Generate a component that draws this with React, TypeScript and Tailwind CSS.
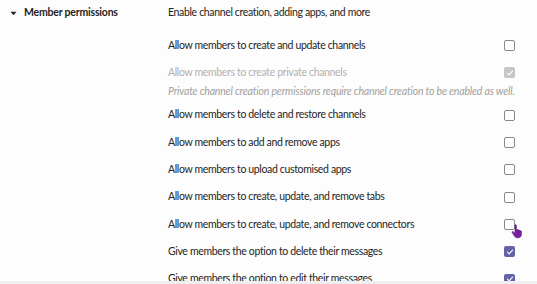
import React from "react";

type Row = { label: string; state: "off" | "on" | "disabled"; note?: string };

const rows: Row[] = [
  { label: "Allow members to create and update channels", state: "off" },
  {
    label: "Allow members to create private channels",
    state: "disabled",
    note: "Private channel creation permissions require channel creation to be enabled as well.",
  },
  { label: "Allow members to delete and restore channels", state: "off" },
  { label: "Allow members to add and remove apps", state: "off" },
  { label: "Allow members to upload customised apps", state: "off" },
  { label: "Allow members to create, update, and remove tabs", state: "off" },
  { label: "Allow members to create, update, and remove connectors", state: "off" },
  { label: "Give members the option to delete their messages", state: "on" },
  { label: "Give members the option to edit their messages", state: "on" },
];

function Box({ state }: { state: Row["state"] }) {
  if (state === "off") {
    return <div className="w-[11px] h-[11px] shrink-0 rounded-[2px] border border-[#8a8886] bg-white" />;
  }
  const bg = state === "on" ? "bg-[#6264a7]" : "bg-[#c8c6c4]";
  return (
    <div className={`w-[11px] h-[11px] shrink-0 rounded-[2px] ${bg} flex items-center justify-center`}>
      <svg width="8" height="8" viewBox="0 0 8 8" fill="none">
        <path d="M1.5 4.2 L3.2 5.8 L6.5 2.2" stroke="white" strokeWidth="1.1" strokeLinecap="round" strokeLinejoin="round" />
      </svg>
    </div>
  );
}

export default function App() {
  return (
    <div
      className="relative w-[537px] h-[284px] overflow-hidden bg-[#fdfdfd] text-[#252423]"
      style={{ fontFamily: 'Lato, "Noto Sans", sans-serif' }}
    >
      <div className="flex pt-[4px]">
        <div className="w-[168px] shrink-0 flex items-center h-[18px] pl-[10px]">
          <svg width="7" height="5" viewBox="0 0 7 5" className="mr-[7px]">
            <path d="M0.5 0.8 L6.5 0.8 L3.5 4.2 Z" fill="#252423" />
          </svg>
          <span className="text-[10.5px] font-bold tracking-[-0.2px] whitespace-nowrap">Member permissions</span>
        </div>
        <div className="w-[347px] shrink-0">
          <div className="h-[18px] flex items-center text-[10.5px] tracking-[-0.35px] whitespace-nowrap">
            Enable channel creation, adding apps, and more
          </div>
          <div className="h-[10px]" />
          {rows.map((r, i) => (
            <div key={i}>
              <div className="h-[27.33px] flex items-center justify-between">
                <span
                  className={`text-[10.5px] tracking-[-0.35px] whitespace-nowrap ${
                    r.state === "disabled" ? "text-[#b3b0ad]" : ""
                  }`}
                >
                  {r.label}
                </span>
                <Box state={r.state} />
              </div>
              {r.note && (
                <div className="h-[18px] -mt-[4px] mb-[1px] flex items-center text-[10.5px] tracking-[-0.18px] italic whitespace-nowrap text-[#a19f9d]">
                  {r.note}
                </div>
              )}
            </div>
          ))}
        </div>
      </div>
      <div className="absolute left-0 right-0 bottom-0 h-[3px] bg-[#efefef]" />
      <svg className="absolute left-[511px] top-[224px]" width="13" height="15" viewBox="0 0 13 15">
        <path
          d="M4 1.2 C4 0.5 5.4 0.5 5.4 1.2 L5.4 6 L6.2 6 C6.2 5.3 7.6 5.3 7.6 6 L7.6 6.6 C7.6 6 9 6 9 6.6 L9 7.2 C9 6.6 10.4 6.6 10.4 7.3 L10.4 10.5 C10.4 12.5 9 13.8 7.2 13.8 L6.2 13.8 C4.8 13.8 3.9 13 3.2 11.8 L1.2 8.6 C0.8 7.9 1.6 7.2 2.3 7.8 L4 9.4 Z"
          fill="#7a1fa2"
          stroke="#5b1080"
          strokeWidth="0.6"
        />
      </svg>
    </div>
  );
}
